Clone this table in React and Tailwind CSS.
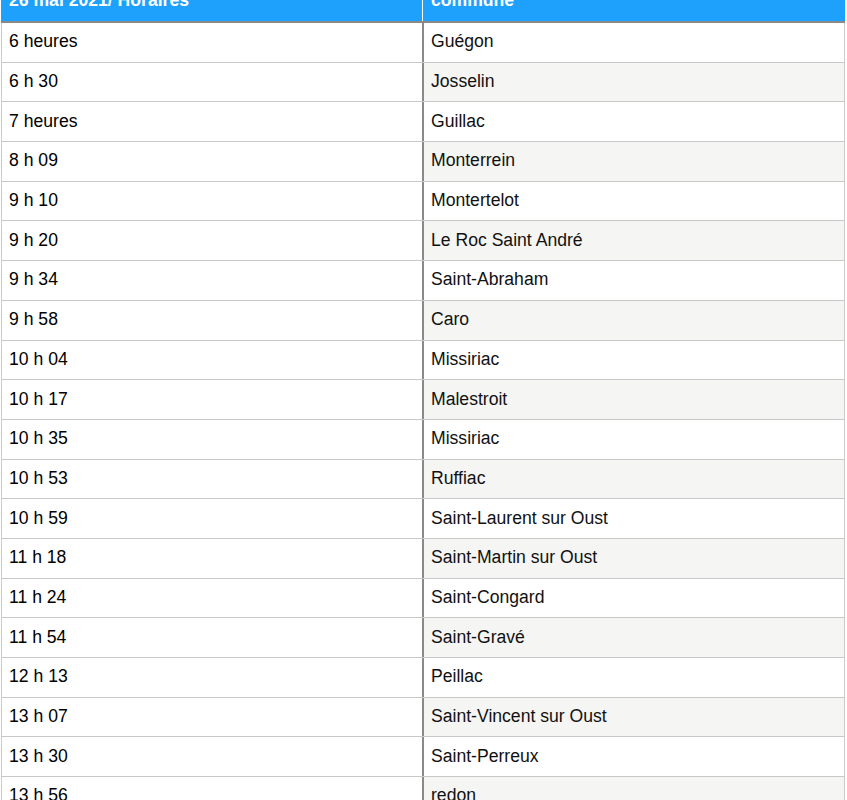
import React from 'react'

const rows = [
  ['6 heures', 'Guégon'],
  ['6 h 30', 'Josselin'],
  ['7 heures', 'Guillac'],
  ['8 h 09', 'Monterrein'],
  ['9 h 10', 'Montertelot'],
  ['9 h 20', 'Le Roc Saint André'],
  ['9 h 34', 'Saint-Abraham'],
  ['9 h 58', 'Caro'],
  ['10 h 04', 'Missiriac'],
  ['10 h 17', 'Malestroit'],
  ['10 h 35', 'Missiriac'],
  ['10 h 53', 'Ruffiac'],
  ['10 h 59', 'Saint-Laurent sur Oust'],
  ['11 h 18', 'Saint-Martin sur Oust'],
  ['11 h 24', 'Saint-Congard'],
  ['11 h 54', 'Saint-Gravé'],
  ['12 h 13', 'Peillac'],
  ['13 h 07', 'Saint-Vincent sur Oust'],
  ['13 h 30', 'Saint-Perreux'],
  ['13 h 56', 'redon'],
  ['14 h 20', 'Redon'],
]

const App = () => {
  return (
    <div
      className="bg-white h-[800px] overflow-hidden text-[17.6px] leading-[20px]"
      style={{ fontFamily: '"Liberation Sans", Arial, sans-serif' }}
    >
      <div className="ml-px w-[844px] -mt-[19px]">
        {/* en-tête */}
        <div className="flex h-[42px] bg-[#1ea0fd] text-white font-bold border-b-2 border-[#8a8a8a]">
          <div className="w-[422px] pl-2 pb-[2px] flex items-center border-r border-white">26 mai 2021/ Horaires</div>
          <div className="flex-1 pl-2 pb-[2px] flex items-center">commune</div>
        </div>

        {rows.map(([time, town], i) => (
          <div key={i} className="flex h-[39.7px] border-b border-[#c8c8c8]">
            <div className="w-[423px] pl-[7px] pb-[2px] flex items-center bg-white text-black border-l border-l-[#cccccc] border-r-2 border-r-[#8a8a8a]">
              {time}
            </div>
            <div
              className={
                'flex-1 pl-[7px] pb-[2px] flex items-center text-[#111] border-r border-[#cccccc] ' +
                (i % 2 === 1 ? 'bg-[#f5f5f3]' : 'bg-white')
              }
            >
              {town}
            </div>
          </div>
        ))}
      </div>
    </div>
  )
}

export default App
